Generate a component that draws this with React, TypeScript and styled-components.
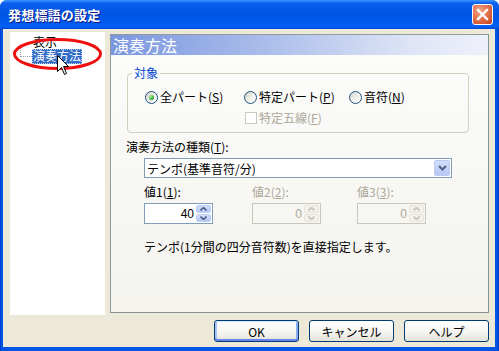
import styled, { createGlobalStyle } from 'styled-components';

const GlobalStyle = createGlobalStyle`
  html, body {
    margin: 0;
    padding: 0;
    background: #ffffff;
  }
  body {
    font-family: "Noto Sans CJK JP", "Liberation Sans", sans-serif;
    font-size: 12px;
    color: #000;
  }
`;

const UI_FONT = `"Noto Sans CJK JP", "Liberation Sans", sans-serif`;

const VALUES = [
  { key: '1', value: '40', disabled: false },
  { key: '2', value: '0', disabled: true },
  { key: '3', value: '0', disabled: true },
];

function App() {
  return (
    <>
      <GlobalStyle />
      <Window>
        <TitleBar>
          <Title>発想標語の設定</Title>
          <CloseButton>
            <svg width="13" height="13" viewBox="0 0 13 13">
              <path d="M2 2 L11 11 M11 2 L2 11" stroke="#fff" strokeWidth="2.4" strokeLinecap="square" />
            </svg>
          </CloseButton>
        </TitleBar>
        <Body>
          <Content>
            <Tree>
              <TreeRoot>表示</TreeRoot>
              <TreeRow>
                <Connector />
                <TreeItem $selected>演奏方法</TreeItem>
              </TreeRow>
              <Mark width="95" height="48" viewBox="0 0 95 48">
                <ellipse cx="47.5" cy="22" rx="43" ry="14.5" fill="none" stroke="#ee1010" strokeWidth="3" />
              </Mark>
              <Cursor width="13" height="21" viewBox="0 0 13 21">
                <path
                  d="M0.5 0.5 L0.5 16.5 L4.5 12.5 L7.5 19.5 L9.5 18.5 L6.5 11.5 L11.5 11.5 Z"
                  fill="#fff"
                  stroke="#000"
                  strokeWidth="1"
                />
              </Cursor>
            </Tree>
            <Panel>
              <PanelHeader>演奏方法</PanelHeader>
              <PanelBody>
                <Group>
                  <Legend>対象</Legend>
                  <RadioGrid>
                    <Option>
                      <Radio $checked />
                      <span>
                        全パート(<u>S</u>)
                      </span>
                    </Option>
                    <Option>
                      <Radio />
                      <span>
                        特定パート(<u>P</u>)
                      </span>
                    </Option>
                    <Option>
                      <Radio />
                      <span>
                        音符(<u>N</u>)
                      </span>
                    </Option>
                    <span />
                    <Option $disabled $shift>
                      <Check />
                      <span>
                        特定五線(<u>F</u>)
                      </span>
                    </Option>
                  </RadioGrid>
                </Group>
                <Label>
                  演奏方法の種類(<u>T</u>):
                </Label>
                <Select>
                  <span>テンポ(基準音符/分)</span>
                  <DropButton>
                    <svg width="9" height="6" viewBox="0 0 9 6">
                      <path d="M1 1 L4.5 4.5 L8 1" stroke="#4d6185" strokeWidth="2" fill="none" />
                    </svg>
                  </DropButton>
                </Select>
                <Values>
                  {VALUES.map((v) => (
                    <ValueCol key={v.key}>
                      <ValueLabel $disabled={v.disabled}>
                        値{v.key}(<u>{v.key}</u>):
                      </ValueLabel>
                      <Spin $disabled={v.disabled}>
                        <SpinText>{v.value}</SpinText>
                        <SpinButtons>
                          <SpinArrow $disabled={v.disabled}>
                            <svg width="7" height="4" viewBox="0 0 7 4">
                              <path d="M0.5 3.5 L3.5 0.5 L6.5 3.5" stroke="currentColor" strokeWidth="1.6" fill="none" />
                            </svg>
                          </SpinArrow>
                          <SpinArrow $disabled={v.disabled}>
                            <svg width="7" height="4" viewBox="0 0 7 4">
                              <path d="M0.5 0.5 L3.5 3.5 L6.5 0.5" stroke="currentColor" strokeWidth="1.6" fill="none" />
                            </svg>
                          </SpinArrow>
                        </SpinButtons>
                      </Spin>
                    </ValueCol>
                  ))}
                </Values>
                <Description>テンポ(1分間の四分音符数)を直接指定します。</Description>
              </PanelBody>
            </Panel>
          </Content>
          <Buttons>
            <Button $default>OK</Button>
            <Button>キャンセル</Button>
            <Button>ヘルプ</Button>
          </Buttons>
        </Body>
      </Window>
    </>
  );
}
export default App;

const Window = styled.div`
  width: 499px;
  height: 351px;
  display: flex;
  flex-direction: column;
  border-radius: 7px 7px 0 0;
  overflow: hidden;
  background: linear-gradient(90deg, #0029b8 0px, #0055e5 1px, #0055e5 498px, #001ea0 499px);
`;

const TitleBar = styled.div`
  height: 29px;
  flex-shrink: 0;
  display: flex;
  align-items: center;
  justify-content: space-between;
  padding: 0 6px 0 8px;
  background: linear-gradient(#3d95ff 0%, #0a5fee 12%, #0055e5 45%, #0059ee 80%, #0062f5 90%, #0048d8 100%);
`;

const Title = styled.div`
  color: #fff;
  font-family: ${UI_FONT};
  font-size: 13px;
  font-weight: 700;
  letter-spacing: 0.2px;
  text-shadow: 1px 1px 0 #0a1883;
`;

const CloseButton = styled.div`
  width: 21px;
  height: 21px;
  box-sizing: border-box;
  border: 1px solid #fff;
  border-radius: 3px;
  display: flex;
  align-items: center;
  justify-content: center;
  background: radial-gradient(circle at 35% 30%, #f0a586 0%, #e3734f 45%, #c8401c 100%);
`;

const Body = styled.div`
  flex: 1;
  margin: 0 4px 4px 3px;
  padding: 3px 6px 0 7px;
  background: #ece9d8;
`;

const Content = styled.div`
  display: flex;
  align-items: flex-start;
  gap: 5px;
`;

const Tree = styled.div`
  position: relative;
  width: 95px;
  height: 283px;
  padding: 4px 0 0 23px;
  box-sizing: border-box;
  background: #fff;
`;

const TreeRoot = styled.div`
  height: 12px;
  line-height: 12px;
`;

const TreeRow = styled.div`
  display: flex;
  align-items: flex-start;
  margin: 1px 0 0 -13px;
`;

const Connector = styled.span`
  width: 11px;
  height: 8px;
  margin-top: -1px;
  border-left: 1px dotted #a0a0a0;
  border-bottom: 1px dotted #a0a0a0;
`;

const TreeItem = styled.span<{ $selected?: boolean }>`
  height: 15px;
  line-height: 14px;
  padding: 0 1px;
  box-sizing: border-box;
  color: ${(p) => (p.$selected ? '#fff' : '#000')};
  background: ${(p) => (p.$selected ? '#316ac5' : 'transparent')};
  outline: ${(p) => (p.$selected ? '1px dotted #b8ccec' : 'none')};
  outline-offset: -1px;
`;

const Mark = styled.svg`
  position: absolute;
  left: 0;
  top: 0;
  pointer-events: none;
`;

const Cursor = styled.svg`
  position: absolute;
  left: 47px;
  top: 23px;
`;

const Panel = styled.div`
  width: 379px;
  height: 279px;
  margin-top: 2px;
  box-sizing: border-box;
  border: 1px solid #919b9c;
  border-right-color: #8a9192;
  border-bottom-color: #8a9192;
  background: linear-gradient(#fcfcfb, #f4f3ee);
`;

const PanelHeader = styled.div`
  height: 20px;
  padding-left: 2px;
  line-height: 20px;
  color: #fff;
  font-size: 16px;
  background: linear-gradient(90deg, #7a96df 0%, #a9bcea 40%, #dfe5f6 80%, #eef1fa 100%);
`;

const PanelBody = styled.div`
  padding-left: 15px;
`;

const Group = styled.fieldset`
  width: 342px;
  margin: 11px 0 0 1px;
  padding: 0 0 7px 0;
  box-sizing: border-box;
  border: 1px solid #d0d0bf;
  border-radius: 4px;
`;

const Legend = styled.legend`
  margin-left: 4px;
  padding: 0 2px;
  line-height: 14px;
  color: #0046d5;
`;

const RadioGrid = styled.div`
  display: grid;
  grid-template-columns: 99px 105px auto;
  row-gap: 7px;
  margin: 10px 0 0 17px;
`;

const Option = styled.label<{ $disabled?: boolean; $shift?: boolean }>`
  display: flex;
  align-items: center;
  gap: 2px;
  height: 14px;
  line-height: 14px;
  white-space: nowrap;
  margin-left: ${(p) => (p.$shift ? '1px' : '0')};
  color: ${(p) => (p.$disabled ? '#aca899' : '#000')};
`;

const Radio = styled.span<{ $checked?: boolean }>`
  position: relative;
  width: 13px;
  height: 13px;
  flex-shrink: 0;
  box-sizing: border-box;
  border: 1px solid #1c5180;
  border-radius: 50%;
  background: linear-gradient(135deg, #d4d1c6 0%, #f3f2ee 55%, #fff 100%);
  &::after {
    content: '';
    display: ${(p) => (p.$checked ? 'block' : 'none')};
    position: absolute;
    left: 3px;
    top: 3px;
    width: 5px;
    height: 5px;
    border-radius: 50%;
    background: radial-gradient(circle at 35% 35%, #a8f0a0, #21a121 70%);
  }
`;

const Check = styled.span`
  width: 12px;
  height: 12px;
  flex-shrink: 0;
  box-sizing: border-box;
  border: 1px solid #cac8bb;
  background: #fff;
`;

const Label = styled.div`
  margin-top: 7px;
  line-height: 14px;
`;

const Select = styled.div`
  width: 308px;
  height: 20px;
  margin: 4px 0 0 18px;
  box-sizing: border-box;
  border: 1px solid #7f9db9;
  background: #fff;
  display: flex;
  align-items: center;
  justify-content: space-between;
  padding: 0 1px 0 2px;
`;

const DropButton = styled.span`
  width: 16px;
  height: 16px;
  display: flex;
  align-items: center;
  justify-content: center;
  border-radius: 2px;
  background: linear-gradient(#d2ddfb, #b5c7f5);
  border: 1px solid #b9c9ef;
  box-sizing: border-box;
`;

const Values = styled.div`
  display: grid;
  grid-template-columns: 108px 105px 70px;
  margin: 7px 0 0 18px;
`;

const ValueCol = styled.div`
  display: flex;
  flex-direction: column;
  gap: 4px;
`;

const ValueLabel = styled.div<{ $disabled?: boolean }>`
  line-height: 14px;
  color: ${(p) => (p.$disabled ? '#aca899' : '#000')};
`;

const Spin = styled.div<{ $disabled?: boolean }>`
  width: 69px;
  height: 21px;
  box-sizing: border-box;
  border: 1px solid ${(p) => (p.$disabled ? '#c9c7ba' : '#7f9db9')};
  background: ${(p) => (p.$disabled ? 'transparent' : '#fff')};
  color: ${(p) => (p.$disabled ? '#aca899' : '#000')};
  display: flex;
  align-items: center;
  padding: 1px;
`;

const SpinText = styled.span`
  flex: 1;
  text-align: right;
  padding-right: 2px;
  font-family: "Liberation Sans", sans-serif;
`;

const SpinButtons = styled.div`
  display: flex;
  flex-direction: column;
  gap: 1px;
  height: 17px;
`;

const SpinArrow = styled.span<{ $disabled?: boolean }>`
  width: 15px;
  height: 8px;
  display: flex;
  align-items: center;
  justify-content: center;
  border-radius: 2px;
  color: ${(p) => (p.$disabled ? '#c4c2b8' : '#4d6185')};
  background: ${(p) => (p.$disabled ? '#f2f1ec' : 'linear-gradient(#d2ddfb, #b5c7f5)')};
  border: 1px solid ${(p) => (p.$disabled ? '#e8e6dc' : '#c0d0f4')};
  box-sizing: border-box;
`;

const Description = styled.div`
  margin: 16px 0 0 18px;
  line-height: 14px;
`;

const Buttons = styled.div`
  display: flex;
  justify-content: flex-end;
  gap: 10px;
  margin-top: 5px;
`;

const Button = styled.button<{ $default?: boolean }>`
  width: 85px;
  height: 22px;
  padding: 0;
  box-sizing: border-box;
  border: 1px solid #003c74;
  border-radius: 3px;
  font-family: ${UI_FONT};
  font-size: 12px;
  color: #000;
  background: linear-gradient(#ffffff 0%, #f5f5f1 55%, #e4e2d6 100%);
  box-shadow: ${(p) =>
    p.$default ? 'inset 0 1px 0 #cee7ff, inset 0 -2px 0 #6982ee, inset 2px 0 0 #a8c4f4, inset -2px 0 0 #89adf0' : 'none'};
`;
